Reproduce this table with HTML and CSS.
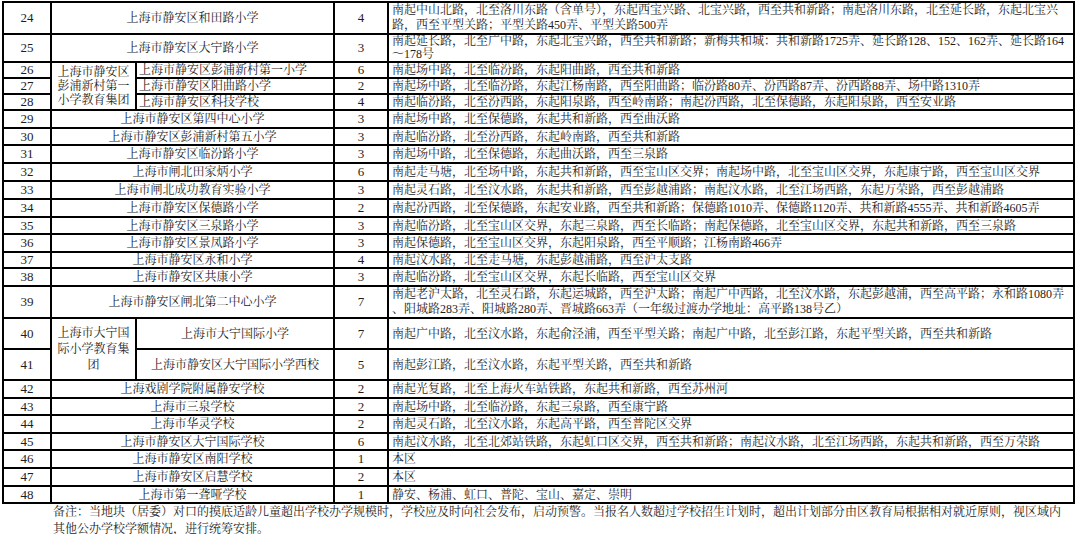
FILE: index.html
```html
<!DOCTYPE html>
<html lang="zh-CN">
<head>
<meta charset="utf-8">
<title>学区划分</title>
<link rel="stylesheet" href="styles.css">
</head>
<body>
<table class="grid">
  <colgroup>
    <col class="c-no">
    <col class="c-group">
    <col class="c-school">
    <col class="c-count">
    <col class="c-area">
  </colgroup>
  <tbody>
    <tr class="r32"><td class="no">24</td><td class="school" colspan="2">上海市静安区和田路小学</td><td class="count">4</td><td class="area">南起中山北路，北至洛川东路（含单号），东起西宝兴路、北宝兴路，西至共和新路；南起洛川东路，北至延长路，东起北宝兴<br>路，西至平型关路；平型关路450弄、平型关路500弄</td></tr>
    <tr class="r28"><td class="no">25</td><td class="school" colspan="2">上海市静安区大宁路小学</td><td class="count">3</td><td class="area">南起延长路，北至广中路，东起北宝兴路，西至共和新路；新梅共和城：共和新路1725弄、延长路128、152、162弄、延长路164<br>～178号</td></tr>
    <tr class="r16"><td class="no">26</td><td class="group" rowspan="3">上海市静安区彭浦新村第一小学教育集团</td><td class="school left">上海市静安区彭浦新村第一小学</td><td class="count">6</td><td class="area">南起场中路，北至临汾路，东起阳曲路，西至共和新路</td></tr>
    <tr class="r16"><td class="no">27</td><td class="school left">上海市静安区阳曲路小学</td><td class="count">2</td><td class="area">南起场中路，北至临汾路，东起江杨南路，西至阳曲路；临汾路80弄、汾西路87弄、汾西路88弄、场中路1310弄</td></tr>
    <tr class="r16"><td class="no">28</td><td class="school left">上海市静安区科技学校</td><td class="count">4</td><td class="area">南起临汾路，北至汾西路，东起阳泉路，西至岭南路；南起汾西路，北至保德路，东起阳泉路，西至安业路</td></tr>
    <tr class="r18"><td class="no">29</td><td class="school" colspan="2">上海市静安区第四中心小学</td><td class="count">3</td><td class="area">南起场中路，北至保德路，东起共和新路，西至曲沃路</td></tr>
    <tr class="r17"><td class="no">30</td><td class="school" colspan="2">上海市静安区彭浦新村第五小学</td><td class="count">3</td><td class="area">南起临汾路，北至汾西路，东起岭南路，西至共和新路</td></tr>
    <tr class="r18"><td class="no">31</td><td class="school" colspan="2">上海市静安区临汾路小学</td><td class="count">3</td><td class="area">南起场中路，北至保德路，东起曲沃路，西至三泉路</td></tr>
    <tr class="r18"><td class="no">32</td><td class="school" colspan="2">上海市闸北田家炳小学</td><td class="count">6</td><td class="area">南起走马塘，北至场中路，东起共和新路，西至宝山区交界；南起场中路，北至宝山区交界，东起康宁路，西至宝山区交界</td></tr>
    <tr class="r18"><td class="no">33</td><td class="school" colspan="2">上海市闸北成功教育实验小学</td><td class="count">3</td><td class="area">南起灵石路，北至汶水路，东起共和新路，西至彭越浦路；南起汶水路，北至江场西路，东起万荣路，西至彭越浦路</td></tr>
    <tr class="r18"><td class="no">34</td><td class="school" colspan="2">上海市静安区保德路小学</td><td class="count">2</td><td class="area">南起汾西路，北至保德路，东起安业路，西至共和新路；保德路1010弄、保德路1120弄、共和新路4555弄、共和新路4605弄</td></tr>
    <tr class="r17"><td class="no">35</td><td class="school" colspan="2">上海市静安区三泉路小学</td><td class="count">3</td><td class="area">南起临汾路，北至宝山区交界，东起三泉路，西至长临路；南起保德路，北至宝山区交界，东起共和新路，西至三泉路</td></tr>
    <tr class="r18"><td class="no">36</td><td class="school" colspan="2">上海市静安区景凤路小学</td><td class="count">3</td><td class="area">南起保德路，北至宝山区交界，东起阳泉路，西至平顺路；江杨南路466弄</td></tr>
    <tr class="r16"><td class="no">37</td><td class="school" colspan="2">上海市静安区永和小学</td><td class="count">4</td><td class="area">南起汶水路，北至走马塘，东起彭越浦路，西至沪太支路</td></tr>
    <tr class="r18"><td class="no">38</td><td class="school" colspan="2">上海市静安区共康小学</td><td class="count">3</td><td class="area">南起临汾路，北至宝山区交界，东起长临路，西至宝山区交界</td></tr>
    <tr class="r32"><td class="no">39</td><td class="school" colspan="2">上海市静安区闸北第二中心小学</td><td class="count">7</td><td class="area">南起老沪太路，北至灵石路，东起运城路，西至沪太路；南起广中西路，北至汶水路，东起彭越浦，西至高平路；永和路1080弄<br>、阳城路283弄、阳城路280弄、晋城路663弄（一年级过渡办学地址：高平路138号乙）</td></tr>
    <tr class="r31"><td class="no">40</td><td class="group" rowspan="2">上海市大宁国际小学教育集团</td><td class="school">上海市大宁国际小学</td><td class="count">7</td><td class="area">南起广中路，北至汶水路，东起俞泾浦，西至平型关路；南起广中路，北至彭江路，东起平型关路，西至共和新路</td></tr>
    <tr class="r31"><td class="no">41</td><td class="school">上海市静安区大宁国际小学西校</td><td class="count">5</td><td class="area">南起彭江路，北至汶水路，东起平型关路，西至共和新路</td></tr>
    <tr class="r18"><td class="no">42</td><td class="school" colspan="2">上海戏剧学院附属静安学校</td><td class="count">2</td><td class="area">南起光复路，北至上海火车站铁路，东起共和新路，西至苏州河</td></tr>
    <tr class="r17"><td class="no">43</td><td class="school" colspan="2">上海市三泉学校</td><td class="count">2</td><td class="area">南起场中路，北至临汾路，东起三泉路，西至康宁路</td></tr>
    <tr class="r18"><td class="no">44</td><td class="school" colspan="2">上海市华灵学校</td><td class="count">2</td><td class="area">南起灵石路，北至汶水路，东起高平路，西至普陀区交界</td></tr>
    <tr class="r17"><td class="no">45</td><td class="school" colspan="2">上海市静安区大宁国际学校</td><td class="count">6</td><td class="area">南起汶水路，北至北郊站铁路，东起虹口区交界，西至共和新路；南起汶水路，北至江场西路，东起共和新路，西至万荣路</td></tr>
    <tr class="r18"><td class="no">46</td><td class="school" colspan="2">上海市静安区南阳学校</td><td class="count">1</td><td class="area">本区</td></tr>
    <tr class="r18"><td class="no">47</td><td class="school" colspan="2">上海市静安区启慧学校</td><td class="count">2</td><td class="area">本区</td></tr>
    <tr class="r17"><td class="no">48</td><td class="school" colspan="2">上海市第一聋哑学校</td><td class="count">1</td><td class="area">静安、杨浦、虹口、普陀、宝山、嘉定、崇明</td></tr>
  </tbody>
</table>
<p class="note">备注：当地块（居委）对口的摸底适龄儿童超出学校办学规模时，学校应及时向社会发布，启动预警。当报名人数超过学校招生计划时，超出计划部分由区教育局根据相对就近原则，视区域内其他公办学校学额情况，进行统筹安排。</p>
</body>
</html>
```
FILE: styles.css
```css
html, body {
  margin: 0;
  padding: 0;
  background: #ffffff;
}

body {
  font-family: "Liberation Serif", "Noto Serif CJK SC", "Noto Sans CJK SC", serif;
  font-size: 12px;
  color: #1e1e1e;
}

.grid {
  border-collapse: collapse;
  table-layout: fixed;
  width: 1071px;
  margin: 1px 0 0 2px;
}

.c-no { width: 48px; }
.c-group { width: 85px; }
.c-school { width: 198px; }
.c-count { width: 54px; }
.c-area { width: 686px; }

.grid td {
  border: 2px solid #000;
  padding: 0;
  vertical-align: middle;
  line-height: 14px;
  white-space: nowrap;
  overflow: hidden;
}

.r16 td { height: 14px; }
.r17 td { height: 15px; }
.r18 td { height: 16px; }
.r28 td { height: 26px; }
.r31 td { height: 29px; }
.r32 td { height: 30px; }

.grid td.no {
  text-align: center;
  font-size: 13px;
}

.grid td.school {
  text-align: center;
}

.grid td.school.left {
  text-align: left;
  padding-left: 2px;
}

.grid td.count {
  text-align: center;
  font-size: 13px;
}

.grid td.area {
  text-align: left;
  padding-left: 3px;
}

.grid td.group {
  text-align: center;
  padding: 0 5px;
  white-space: normal;
  line-height: 14px;
}

.grid .r31 td.group {
  line-height: 16px;
}

.grid .r32 td.area {
  line-height: 15px;
}

.grid .r28 td.area {
  line-height: 13px;
}

.note {
  margin: 0;
  padding: 0 0 0 53px;
  width: 1014px;
  line-height: 17px;
}
```
